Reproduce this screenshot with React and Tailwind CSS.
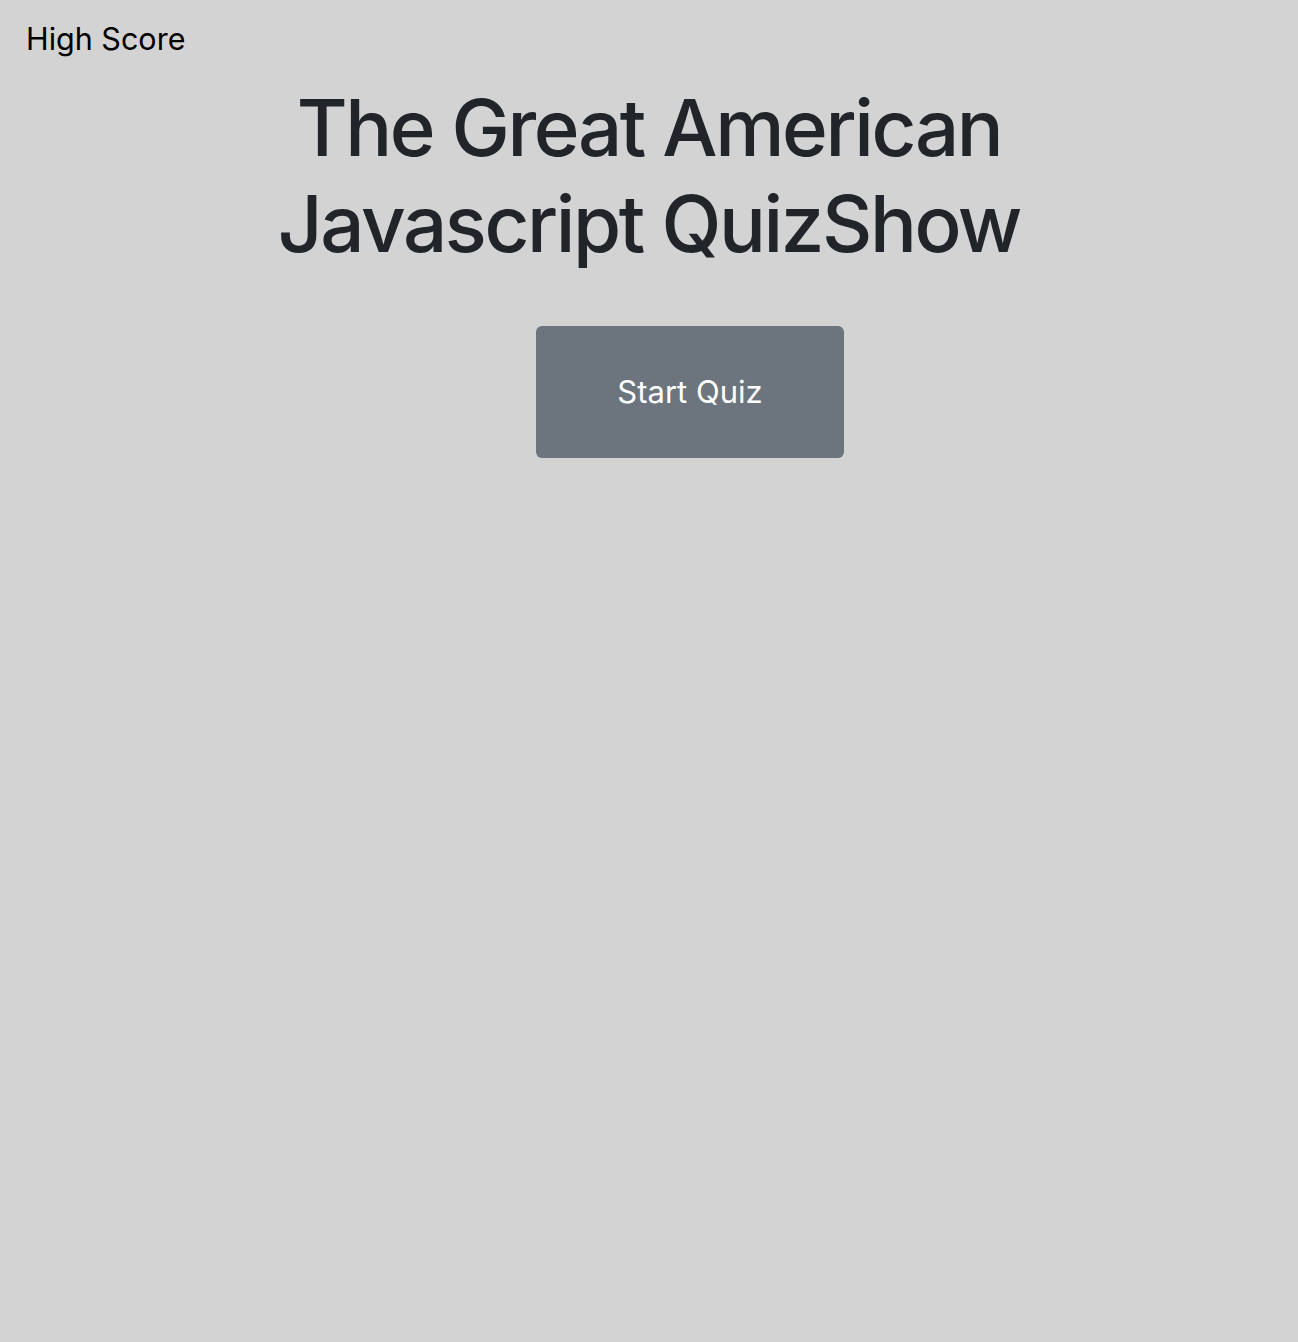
import React from "react";

export default function App() {
  return (
    <div className="min-h-[1342px] bg-[#d3d3d3] font-['Inter',sans-serif] text-[#212529]">
      <header className="px-[26px] pt-[19px]">
        <a className="text-[30.5px] leading-[40px] text-black">High Score</a>
      </header>
      <main className="flex flex-col items-center">
        <h1 className="mt-[21px] text-center text-[78px] font-medium leading-[96px] tracking-[-2.4px]">
          The Great American
          <br />
          Javascript QuizShow
        </h1>
        <div className="mt-[54px] flex w-full justify-center pl-[82px]">
          <button className="h-[132px] w-[308px] rounded-[6px] bg-[#6c757d] text-[31px] text-white">
            Start Quiz
          </button>
        </div>
      </main>
    </div>
  );
}
